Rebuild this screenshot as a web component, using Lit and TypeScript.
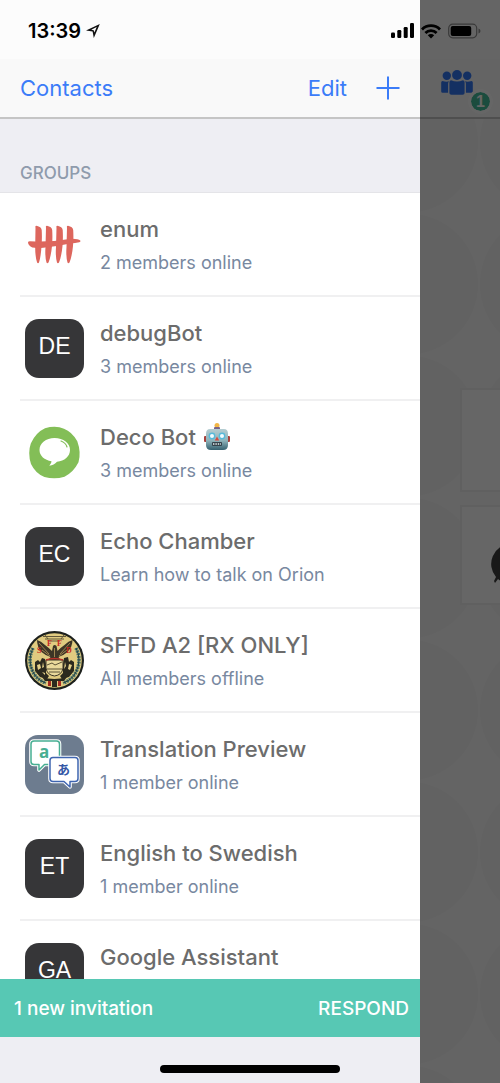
import { LitElement, html, css, svg } from "lit";
import { customElement, property } from "lit/decorators.js";

type Art = "tally" | "bubble" | "seal" | "translate";

interface Group {
  name: string;
  status: string;
  initials?: string;
  art?: Art;
  robot?: boolean;
}

const GROUPS: Group[] = [
  { name: "enum", status: "2 members online", art: "tally" },
  { name: "debugBot", status: "3 members online", initials: "DE" },
  { name: "Deco Bot", status: "3 members online", art: "bubble", robot: true },
  { name: "Echo Chamber", status: "Learn how to talk on Orion", initials: "EC" },
  { name: "SFFD A2 [RX ONLY]", status: "All members offline", art: "seal" },
  { name: "Translation Preview", status: "1 member online", art: "translate" },
  { name: "English to Swedish", status: "1 member online", initials: "ET" },
  { name: "Google Assistant", status: "1 member online", initials: "GA" },
];

const tally = svg`
  <g fill="#dd665d">
    <path d="M10.500 12.500q-.6-1.800 1-1.800q4.800 1 5.200 4.300q.5 8-.2 16q-.5 10-2.500 16.500q-1 1.500-1.900 0q-2-6-1.900-15.500z"/>
    <path d="M21 12.500q-.6-1.800 1-1.800q4.800 1 5.200 4.300q.5 8-.2 16q-.9 10-3.500 16.500q-1.200 1.500-2 0q-1.700-6-1-15.500z"/>
    <path d="M31.500 12.500q-.6-1.800 1-1.800q4.800 1 5.200 4.300q.5 8-.2 16q-.9 10-3.500 16.500q-1.200 1.500-2 0q-1.700-6-1-15.500z"/>
    <path d="M42 12.500q-.6-1.800 1-1.800q4.800 1 5.200 4.300q.5 8-.2 16q-.9 10-3.500 16.500q-1.200 1.500-2 0q-1.700-6-1-15.500z"/>
    <path d="M3 27.500q0-1.300 2-1.300q21 1.200 41.500-2.400q6.500-.2 8.800 1.700q.8 1.300-1 1.800q-4 1-9 1.200q-14 3-27 4.200q-7 .6-11-.2q-4-1.800-4.300-5z"/>
  </g>`;

const bubble = svg`
  <path fill="#83be57" d="M20 5.200q11-3.200 19 .6q8 3 13.300 12.500q4 11 1.200 21q-5 10-14 14.400q-10 3-20 .2q-9-3.500-13.500-13q-3.500-11-.2-20.500q5-11 14.200-15.200z"/>
  <path fill="#fff" d="M29.500 15c9 0 15.500 5 15.500 12c0 6.500-5.500 11-13 11.700q-3 3.500-7.700 4q2.300-2.300 2.200-4.500c-7-1-12-5.300-12-11.200c0-7 6.500-12 15-12z"/>
  <path fill="none" stroke="#83be57" stroke-width="1.200" stroke-linecap="round" d="M36 18q5 2 6 6"/>`;

const seal = svg`
  <circle cx="29.500" cy="29.500" r="29.500" fill="#1d211d"/>
  <circle cx="29.500" cy="29.500" r="27.300" fill="#e0cb80"/>
  <path fill="none" stroke="#47716d" stroke-width="3.600" stroke-dasharray="2 .8" d="M8 17q-6 12 0 24q4 8 13 11M51 17q6 12 0 24q-4 8-13 11"/>
  <path fill="none" stroke="#25403f" stroke-width="1" d="M8 17q-6 12 0 24q4 8 13 11M51 17q6 12 0 24q-4 8-13 11"/>
  <path fill="none" stroke="#625839" stroke-width="1" d="M18 5.500h23M20 8h19M24 10h11M20 4l3 4M39 4l-3 4"/>
  <path fill="#3d3526" d="M12 9q4 1 8 5q4 3 7 6l1-5q1.500-2 3.500 0l1 5q4-4 7-6q4-4 8-5q0 7-5 12q-4 3.500-9 5l2 3h-12l2-3q-5-1.500-9-5q-4.500-5-4.500-12z"/>
  <path fill="none" stroke="#b79b5c" stroke-width=".8" d="M14 12l10 11M17 19l8 6M45 12l-10 11M42 19l-8 6M29.500 17v9"/>
  <path fill="#2b291e" d="M10 31l3-2l2 2l2-4l3 1l1 5v9l3 3l-2 3l-7-2l-5-6z"/>
  <path fill="#2b291e" d="M49 31l-3-2l-2 2l-1-5l-4 1l-1 6v9l-3 3l2 3l7-2l5-6z"/>
  <path fill="#e5d18a" d="M12 34l3-1l1 4l-3 2zM18 31l1 5l-2 1zM44 33l3 1l-2 5l-2-1zM40 31l1 4l-2 3zM17 41l3 1v2z"/>
  <path fill="#e9d99b" stroke="#3a3424" stroke-width="1" d="M21 29h17v8q-1 7-8.500 8q-7.500-1-8.500-8z"/>
  <path fill="none" stroke="#5b5236" stroke-width="1" d="M22 34l5-2l3 2l7-3M22 38h15M24 41h11"/>
  <path fill="none" stroke="#b8322a" stroke-width="1.400" d="M21 29q8-3 17 0"/>
  <path fill="#2b291e" d="M17 46q12 4 25 0l-3 4h-19z"/>
  <path fill="#a32b22" d="M23 50h3v5h-3zM33 50h3v5h-3z"/>
  <path fill="#2b291e" d="M27 50h5v6h-5z"/>
  <g fill="#c9281f" font-family="'Liberation Serif', serif" font-weight="700" font-size="8">
    <text x="12" y="22">S</text>
    <text x="22" y="15">F</text>
    <text x="32" y="15">F</text>
    <text x="41" y="22">D</text>
  </g>`;

const translate = svg`
  <rect width="59" height="59" rx="13" fill="#6d7c8f"/>
  <path fill="#fff" stroke="#fff" stroke-width="3.600" stroke-linejoin="round" d="M9 6h22.500q3 0 3 3v17.500q0 3-3 3h-12l-5.500 5.500v-5.500h-5q-3 0-3-3v-17.500q0-3 3-3z"/>
  <path fill="#fff" stroke="#47ae92" stroke-width="1.500" stroke-linejoin="round" d="M9 6h22.500q3 0 3 3v17.500q0 3-3 3h-12l-5.500 5.500v-5.500h-5q-3 0-3-3v-17.500q0-3 3-3z"/>
  <path fill="#fff" stroke="#fff" stroke-width="3.600" stroke-linejoin="round" d="M28 22.500h22q3 0 3 3v18q0 3-3 3h-5v5.500l-6-5.500h-11q-3 0-3-3v-18q0-3 3-3z"/>
  <path fill="#fff" stroke="#3f65b0" stroke-width="1.500" stroke-linejoin="round" d="M28 22.500h22q3 0 3 3v18q0 3-3 3h-5v5.500l-6-5.500h-11q-3 0-3-3v-18q0-3 3-3z"/>
  <text x="14" y="23" fill="#47ae92" font-family="'Open Sans', sans-serif" font-weight="700" font-size="17">a</text>
  <text x="32" y="39" fill="#3457a6" font-family="'Noto Sans CJK JP', sans-serif" font-weight="700" font-size="13">あ</text>`;

const ART = { tally, bubble, seal, translate };

const robot = html`<svg class="robot" viewBox="0 0 26 27" role="img" aria-label="robot">
  <defs>
    <linearGradient id="face" x1="0" y1="0" x2="0" y2="1">
      <stop offset="0" stop-color="#b5cdd2"/><stop offset=".55" stop-color="#8fb3ba"/><stop offset="1" stop-color="#35606f"/>
    </linearGradient>
  </defs>
  <rect x="0" y="13" width="4" height="6" rx="1" fill="#a8403c"/>
  <rect x="22" y="13" width="4" height="6" rx="1" fill="#a8403c"/>
  <circle cx="13" cy="2.500" r="2.500" fill="#f2b646"/>
  <rect x="10" y="4" width="6" height="3" rx="1" fill="#7a6488"/>
  <path fill="url(#face)" d="M6 6h14q4 0 4 5v11q0 5-5 5h-12q-5 0-5-5v-11q0-5 4-5z"/>
  <circle cx="8" cy="13" r="3.400" fill="#58b9da"/><circle cx="18" cy="13" r="3.400" fill="#58b9da"/>
  <circle cx="8" cy="13" r="2" fill="#f3fbfd"/><circle cx="18" cy="13" r="2" fill="#f3fbfd"/>
  <path fill="#d8483e" d="M13 13.500l2.200 4h-4.400z"/>
  <rect x="8" y="19" width="10" height="4" rx="1" fill="#35434b"/>
  <path stroke="#e6eef0" stroke-width="1.400" stroke-dasharray="1.400 1" d="M9 21h8"/>
</svg>`;

@customElement("group-row")
class GroupRow extends LitElement {
  @property({ attribute: false }) group!: Group;

  static styles = css`
    :host { display: block; padding-left: 20px; }
    .row {
      box-sizing: border-box;
      display: flex;
      align-items: center;
      gap: 16px;
      width: 100%;
      height: 104px;
      padding: 0 16px 0 5px;
      border: 0;
      border-bottom: 2px solid #f0f0f1;
      background: none;
      font: inherit;
      text-align: left;
    }
    .avatar { flex: none; width: 59px; height: 59px; }
    .initials {
      display: flex;
      justify-content: center;
      box-sizing: border-box;
      padding-top: 13px;
      border-radius: 14px;
      background: #363638;
      color: #fff;
      font: 23px/28px "Liberation Sans", Arial, sans-serif;
    }
    .text { display: flex; flex-direction: column; gap: 6px; min-width: 0; padding-top: 3px; }
    .name { display: flex; align-items: center; gap: 8px; color: #6c6c6c; font-size: 22px; font-weight: 500; line-height: 28px; white-space: nowrap; }
    .status { color: #7888a0; font-size: 18px; line-height: 28px; white-space: nowrap; }
    .robot { width: 26px; height: 27px; }
  `;

  render() {
    const { name, status, initials, art, robot: bot } = this.group;
    return html`<button class="row" type="button">
      ${art
        ? html`<svg class="avatar" viewBox="0 0 59 59" aria-hidden="true">${ART[art]}</svg>`
        : html`<span class="avatar initials">${initials}</span>`}
      <span class="text">
        <span class="name">${name}${bot ? robot : ""}</span>
        <span class="status">${status}</span>
      </span>
    </button>`;
  }
}

@customElement("app-root")
class AppRoot extends LitElement {
  static styles = css`
    :host {
      display: block;
      font-family: Inter, "Liberation Sans", sans-serif;
    }
    .screen {
      position: relative;
      display: grid;
      grid-template-columns: 84fr 16fr;
      height: 100vh;
      overflow: hidden;
    }
    .drawer { display: flex; flex-direction: column; min-width: 0; min-height: 0; background: #eeeef3; }
    .page { position: relative; display: flex; flex-direction: column; min-width: 0; overflow: hidden; background: #fafafa; }
    .dim { position: absolute; inset: 0; border: 0; padding: 0; background: rgba(0, 0, 0, 0.6); }
    .statusbar { flex: none; display: flex; align-items: center; height: 59px; box-sizing: border-box; padding-top: 3px; background: #fcfcfc; }
    .drawer .statusbar { padding-left: 28px; padding-right: 5px; }
    .page .statusbar { gap: 7px; padding-left: 1px; }
    .time { font-size: 20px; font-weight: 600; line-height: 24px; }
    .location { width: 14px; height: 14px; margin-left: 5px; }
    .signal { width: 24px; height: 16px; margin-left: auto; }
    .wifi { flex: none; width: 20px; height: 15px; }
    .battery { flex: none; width: 33px; height: 16px; }
    .nav { flex: none; display: flex; align-items: center; box-sizing: border-box; height: 60px; padding: 0 20px; border-bottom: 2px solid #c5c5c5; background: #f9f9f9; }
    .link { padding: 0; border: 0; background: none; color: #3b7cf8; font: inherit; font-size: 22px; line-height: 28px; }
    .edit { margin-left: auto; margin-right: 29px; }
    .add { display: flex; }
    .add svg { width: 24px; height: 24px; }
    .groups { position: relative; display: flex; padding: 0; border: 0; background: none; margin-bottom: 12px; }
    .people { width: 34px; height: 25px; }
    .badge {
      position: absolute;
      left: 28px;
      top: 19px;
      display: flex;
      align-items: center;
      justify-content: center;
      width: 19px;
      height: 19px;
      border: 3px solid #fff;
      border-radius: 50%;
      background: #45bd9b;
      background-clip: padding-box;
      color: #fff;
      font-size: 16px;
      font-weight: 600;
      line-height: 19px;
    }
    .heading { flex: none; margin: 0; padding: 43px 20px 7px; border-bottom: 1px solid #e4e4e8; color: #8f9bac; font-size: 17px; font-weight: 500; line-height: 23px; }
    .list { flex: 1; min-height: 0; margin: 0; padding: 0; overflow: hidden; background: #fff; list-style: none; }
    .invite { flex: none; display: flex; align-items: center; justify-content: space-between; box-sizing: border-box; height: 58px; padding: 1px 11px 0 14px; margin-bottom: 46px; background: #57c8b4; color: #fff; font-size: 19px; font-weight: 500; line-height: 24px; }
    .respond { padding: 0; border: 0; background: none; color: inherit; font: inherit; }
    .chat {
      flex: 1;
      display: flex;
      flex-direction: column;
      gap: 13px;
      padding: 269px 0 0 40px;
      background: radial-gradient(circle, #f5f5f5 70px, #fafafa 71px) -84px -48px / 143px 142px;
    }
    .card { box-sizing: border-box; height: 104px; border: 2px solid #efefef; border-right: 0; background: #fff; overflow: hidden; }
    .card.short { height: 100px; padding: 35px 0 0 28px; }
    .card svg { display: block; width: 46px; height: 46px; }
    .home { position: absolute; left: 50%; bottom: 10px; width: 36%; height: 8px; margin-left: -18%; border-radius: 4px; background: #000; }
  `;

  render() {
    return html`<div class="screen">
      <aside class="drawer">
        <div class="statusbar">
          <span class="time">13:39</span>
          <svg class="location" viewBox="0 0 14 14" aria-hidden="true">
            <path fill="#111" fill-rule="evenodd" d="M13.800 0L7.800 14L6.600 7.400L0 6.500zM10.700 3.100L5.200 5.800L7.700 6.200L8.400 8.400z"/>
          </svg>
          <svg class="signal" viewBox="0 0 24 16" aria-label="signal" role="img">
            <rect x="0" y="9.500" width="4" height="5.500" rx="1.200"/><rect x="6.300" y="7" width="4" height="8" rx="1.200"/>
            <rect x="12.700" y="4" width="4" height="11" rx="1.200"/><rect x="19" y="0" width="4" height="15" rx="1.200"/>
          </svg>
        </div>
        <nav class="nav">
          <button class="link" type="button">Contacts</button>
          <button class="link edit" type="button">Edit</button>
          <button class="link add" type="button" aria-label="Add">
            <svg viewBox="0 0 24 24"><path fill="none" stroke="#3b7cf8" stroke-width="2" d="M12 .5v23M.5 12h23"/></svg>
          </button>
        </nav>
        <h2 class="heading">GROUPS</h2>
        <ul class="list">
          ${GROUPS.map((g) => html`<li><group-row .group=${g}></group-row></li>`)}
        </ul>
        <div class="invite">
          <span>1 new invitation</span>
          <button class="respond" type="button">RESPOND</button>
        </div>
      </aside>
      <main class="page">
        <div class="statusbar">
          <svg class="wifi" viewBox="0 0 20 15" role="img" aria-label="wifi">
            <path fill="none" stroke="#000" stroke-width="2.800" d="M1 5.400a12.700 12.700 0 0 1 18 0M4.400 9a8 8 0 0 1 11.200 0"/>
            <path d="M10 14.600l-3.200-3.300a4.600 4.600 0 0 1 6.400 0z"/>
          </svg>
          <svg class="battery" viewBox="0 0 33 16" role="img" aria-label="battery">
            <rect x=".7" y="1.200" width="28" height="13.600" rx="4" fill="none" stroke="#8e8e8e" stroke-width="1.200"/>
            <rect x="2.700" y="3" width="20.500" height="10" rx="2"/>
            <path fill="#8e8e8e" d="M30.500 5.500q2 .8 2 2.500t-2 2.500z"/>
          </svg>
        </div>
        <div class="nav">
          <button class="groups" type="button" aria-label="Groups">
            <svg class="people" viewBox="0 0 34 25"><g fill="#3478f6">
              <circle cx="6.800" cy="5.800" r="4.200"/><circle cx="27.200" cy="5.800" r="4.200"/><circle cx="17" cy="5" r="4.900"/>
              <path d="M2.500 11q4 1.400 6.500.3q-.9 1-.9 2.500v9h-5.500q-1.400 0-1.400-1.200v-9q0-1.400 1.300-1.600z"/>
              <path d="M31.500 11q-4 1.400-6.500.3q.9 1 .9 2.500v9h5.500q1.400 0 1.400-1.200v-9q0-1.400-1.300-1.600z"/>
              <path d="M11 10.200q6 2.400 12 0q1.600.3 1.600 2v10.800q0 1.700-2 1.700h-11.200q-2 0-2-1.700v-10.800q0-1.700 1.600-2z"/>
            </g></svg>
            <span class="badge">1</span>
          </button>
        </div>
        <div class="chat">
          <div class="card"></div>
          <div class="card short">
            <svg viewBox="0 0 46 46" aria-hidden="true">
              <path fill="#404040" d="M20 2a20 20 0 1 1-12 35l-3 4l-1-2l2-4a20 20 0 0 1 14-33z"/>
            </svg>
          </div>
        </div>
        <button class="dim" type="button" aria-label="Close contacts"></button>
      </main>
      <div class="home"></div>
    </div>`;
  }
}
